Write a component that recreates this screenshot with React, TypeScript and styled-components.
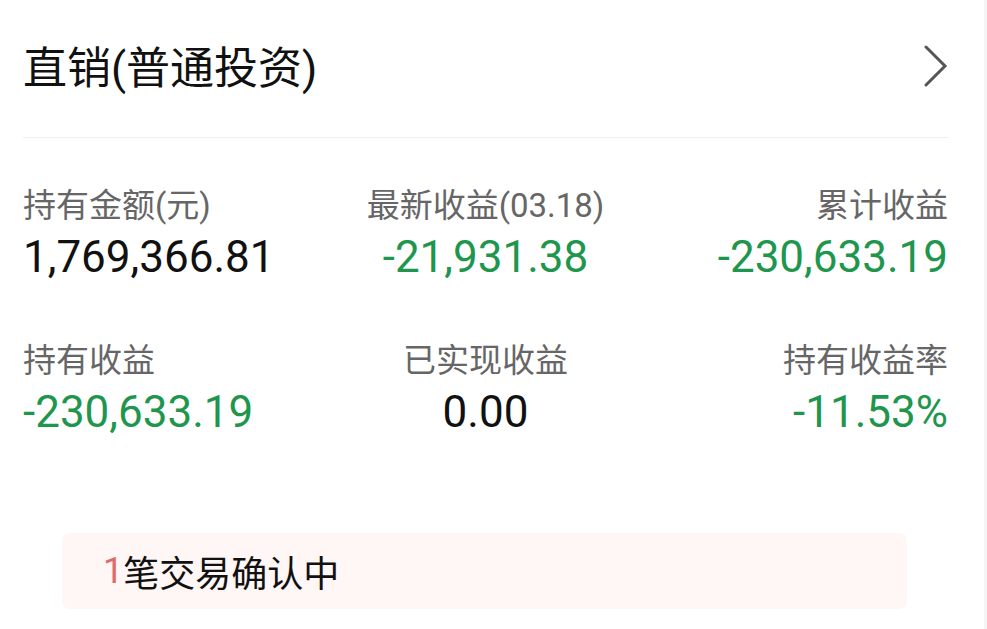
import React from "react";
import styled, { createGlobalStyle } from "styled-components";

const Global = createGlobalStyle`
  html, body { margin: 0; padding: 0; }
  body {
    background: #f5f5f5;
    font-family: Roboto, "Noto Sans CJK SC", sans-serif;
  }
`;

const Card = styled.div`
  width: 984px;
  min-height: 629px;
  box-sizing: border-box;
  background: #ffffff;
  padding: 0 36px 0 23px;
  overflow: hidden;
`;

const Header = styled.div`
  display: flex;
  align-items: center;
  justify-content: space-between;
  padding: 41px 0 40px;
  border-bottom: 1px solid #eeeeee;
`;

const Title = styled.div`
  font-size: 44px;
  line-height: 56px;
  color: #111111;
`;

const Chevron = styled.svg`
  width: 24px;
  height: 42px;
  margin-top: -6px;
  flex: none;
`;

const Stats = styled.div`
  display: grid;
  grid-template-columns: 1fr 1fr 1fr;
  row-gap: 60px;
  padding-top: 48px;
`;

const Cell = styled.div<{ $align: "left" | "center" | "right" }>`
  display: flex;
  flex-direction: column;
  gap: 7px;
  text-align: ${(p) => p.$align};
  white-space: nowrap;
`;

const Label = styled.div`
  font-size: 33px;
  line-height: 40px;
  color: #666666;
`;

const Value = styled.div<{ $tone: "black" | "green" }>`
  font-size: 44px;
  line-height: 48px;
  color: ${(p) => (p.$tone === "green" ? "#1f964e" : "#111111")};
`;

const Pending = styled.div`
  margin: 97px 41px 0 39px;
  height: 76px;
  border-radius: 8px;
  background: #fff6f6;
  display: flex;
  align-items: center;
  padding-left: 41px;
  font-size: 36px;
  color: #111111;
`;

const Count = styled.span`
  color: #e06a6a;
`;

type Stat = {
  label: string;
  value: string;
  tone: "black" | "green";
  align: "left" | "center" | "right";
};

const stats: Stat[] = [
  { label: "持有金额(元)", value: "1,769,366.81", tone: "black", align: "left" },
  { label: "最新收益(03.18)", value: "-21,931.38", tone: "green", align: "center" },
  { label: "累计收益", value: "-230,633.19", tone: "green", align: "right" },
  { label: "持有收益", value: "-230,633.19", tone: "green", align: "left" },
  { label: "已实现收益", value: "0.00", tone: "black", align: "center" },
  { label: "持有收益率", value: "-11.53%", tone: "green", align: "right" },
];

export default function App() {
  return (
    <>
      <Global />
      <Card>
        <Header>
          <Title>直销(普通投资)</Title>
          <Chevron viewBox="0 0 24 42">
            <polyline
              points="2,2 21,21 2,40"
              fill="none"
              stroke="#555555"
              strokeWidth="3"
              strokeLinecap="round"
              strokeLinejoin="miter"
            />
          </Chevron>
        </Header>
        <Stats>
          {stats.map((s, i) => (
            <Cell key={i} $align={s.align}>
              <Label>{s.label}</Label>
              <Value $tone={s.tone}>{s.value}</Value>
            </Cell>
          ))}
        </Stats>
        <Pending>
          <Count>1</Count>笔交易确认中
        </Pending>
      </Card>
    </>
  );
}
